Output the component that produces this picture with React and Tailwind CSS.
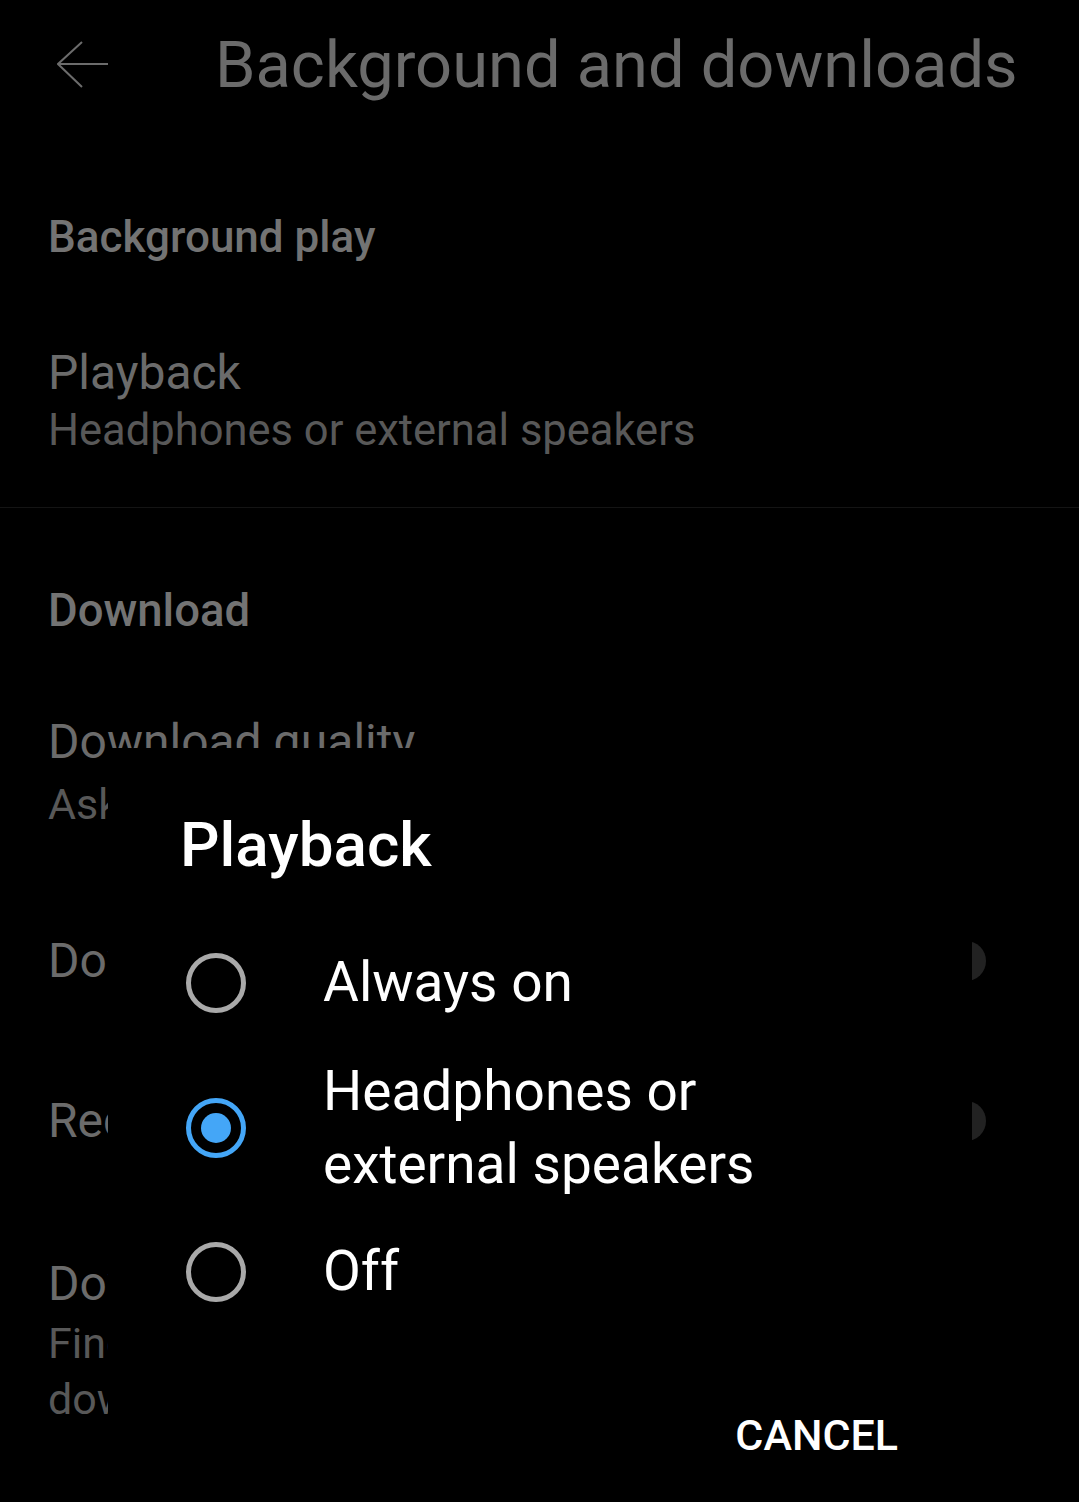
import { useState } from "react";

const Radio = ({ checked }) => (
    <div
        className={
            checked
                ? "flex h-[60px] w-[60px] shrink-0 items-center justify-center rounded-full border-[5px] border-[#44a6f7]"
                : "flex h-[60px] w-[60px] shrink-0 items-center justify-center rounded-full border-[5px] border-[#a9a9a9]"
        }
    >
        {checked && <div className="h-[30px] w-[30px] rounded-full bg-[#44a6f7]"></div>}
    </div>
);

const Toggle = () => (
    <div className="h-[40px] w-[76px] shrink-0 rounded-full bg-[#222222]"></div>
);

export default function App() {
    const [choice, setChoice] = useState(1);

    const options = [
        { label: ["Always on"], mt: "mt-[70px]" },
        { label: ["Headphones or", "external speakers"], mt: "mt-[36px]" },
        { label: ["Off"], mt: "mt-[34px]" },
    ];

    return (
        <div className="relative h-[1502px] w-full overflow-hidden bg-black font-['Roboto','Noto_Sans',sans-serif]">
            {/* settings page, dimmed behind the dialog */}
            <div className="flex h-[130px] items-center pl-[57px]">
                <svg width="52" height="48" viewBox="0 0 52 48" fill="none" stroke="#6c6c6c" strokeWidth="2">
                    <path d="M1 23 H51" />
                    <path d="M25 1 L1 23 L25 46" />
                </svg>
                <h1 className="ml-[106px] text-[65px] leading-none text-[#6b6b6b]">Background and downloads</h1>
            </div>

            <div className="pl-[48px]">
                <div className="mt-[85px] text-[44px] font-medium leading-none text-[#737373]">Background play</div>

                <div className="mt-[90px] text-[48px] leading-none text-[#6b6b6b]">Playback</div>
                <div className="mt-[12px] text-[43.5px] leading-none text-[#585858]">Headphones or external speakers</div>
            </div>

            <div className="mt-[54px] border-b border-[#141414]"></div>

            <div className="pl-[48px]">
                <div className="mt-[80px] text-[45.5px] font-medium leading-none text-[#737373]">Download</div>

                <div className="mt-[85px] text-[48px] leading-none text-[#6b6b6b]">Download quality</div>
                <div className="mt-[17px] text-[43px] leading-none text-[#585858]">Ask each time</div>

                <div className="mt-[111px] flex items-center justify-between pr-[93px]">
                    <div className="text-[48px] leading-none text-[#6b6b6b]">Download over Wi-Fi only</div>
                    <Toggle />
                </div>

                <div className="mt-[112px] flex items-center justify-between pr-[93px]">
                    <div className="text-[48px] leading-none text-[#6b6b6b]">Recommended downloads</div>
                    <Toggle />
                </div>

                <div className="mt-[115px] text-[48px] leading-none text-[#6b6b6b]">Downloads</div>
                <div className="mt-[7px] text-[43px] leading-[56px] text-[#585858]">
                    Find songs and videos you&apos;ve
                    <br />
                    downloaded in your Library
                </div>
            </div>

            {/* dialog */}
            <div className="absolute bottom-0 left-[108px] top-[748px] w-[864px] bg-black">
                <h2 className="pl-[72px] pt-[66px] text-[62px] font-medium leading-none text-white">Playback</h2>

                {options.map((option, index) => (
                    <div
                        key={index}
                        onClick={() => setChoice(index)}
                        className={`${option.mt} flex cursor-pointer items-center pl-[78px]`}
                    >
                        <Radio checked={choice === index} />
                        <div className="ml-[77px] text-[55px] leading-[73px] text-white">
                            {option.label.map((line) => (
                                <div key={line}>{line}</div>
                            ))}
                        </div>
                    </div>
                ))}

                <div className="mt-[106px] flex justify-end pr-[74px]">
                    <button className="text-[43px] font-medium leading-none text-white">CANCEL</button>
                </div>
            </div>
        </div>
    );
}
